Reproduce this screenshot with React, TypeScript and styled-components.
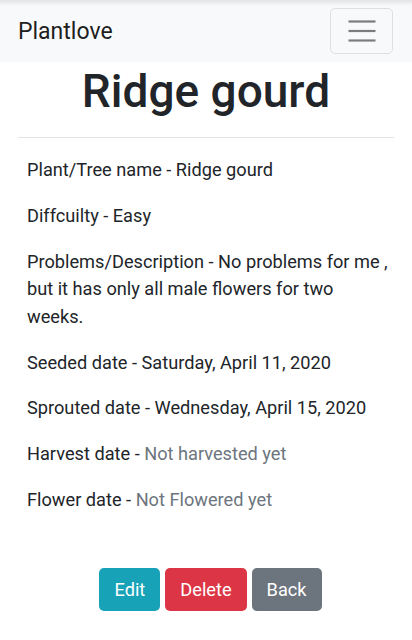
import React from "react";
import styled, { createGlobalStyle } from "styled-components";

const Global = createGlobalStyle`
  html, body { margin: 0; padding: 0; background: #fff; }
  body { font-family: Roboto, "Noto Sans", sans-serif; color: #212529; font-size: 18.2px; }
  * { box-sizing: border-box; }
`;

const Navbar = styled.nav`
  height: 62px;
  display: flex;
  align-items: center;
  justify-content: space-between;
  padding: 0 19px 0 18px;
  background: linear-gradient(#e2e3e4 0px, #f8f9fa 6px, #f8f9fa 100%);
`;

const Brand = styled.a`
  font-size: 23px;
  color: rgba(0, 0, 0, 0.9);
  text-decoration: none;
`;

const Toggler = styled.button`
  width: 63px;
  height: 46px;
  border: 1px solid rgba(0, 0, 0, 0.1);
  border-radius: 5px;
  background: transparent;
  display: flex;
  align-items: center;
  justify-content: center;
  padding: 0;
`;

const Container = styled.main`
  padding: 0 18px;
`;

const Title = styled.h1`
  margin: 2px 0 0;
  text-align: center;
  font-size: 46px;
  font-weight: 500;
  line-height: 1.2;
`;

const Rule = styled.hr`
  margin: 18px 0 0;
  border: 0;
  border-top: 1px solid rgba(0, 0, 0, 0.1);
`;

const Details = styled.section`
  padding: 18px 0 0 9px;
`;

const Para = styled.p`
  margin: 0 0 18.3px;
  font-size: 18.2px;
  line-height: 27.5px;
`;

const Muted = styled.span`
  color: #6c757d;
`;

const Actions = styled.div`
  display: flex;
  justify-content: center;
  gap: 5px;
  margin-top: 55px;
  padding-left: 9px;
`;

const Btn = styled.button<{ $bg: string }>`
  background: ${(p) => p.$bg};
  color: #fff;
  border: 0;
  border-radius: 5px;
  font-family: Roboto, sans-serif;
  font-size: 18.2px;
  height: 43px;
  padding: 0 15px;
`;

export default function App() {
  return (
    <>
      <Global />
      <Navbar>
        <Brand href="#">Plantlove</Brand>
        <Toggler aria-label="menu">
          <svg width="30" height="24" viewBox="0 0 30 24">
            <g stroke="rgba(0,0,0,0.5)" strokeWidth="2.2" strokeLinecap="butt">
              <line x1="1.5" y1="2.5" x2="28.5" y2="2.5" />
              <line x1="1.5" y1="12" x2="28.5" y2="12" />
              <line x1="1.5" y1="21.5" x2="28.5" y2="21.5" />
            </g>
          </svg>
        </Toggler>
      </Navbar>
      <Container>
        <Title>Ridge gourd</Title>
        <Rule />
        <Details>
          <Para>Plant/Tree name - Ridge gourd</Para>
          <Para>Diffcuilty - Easy</Para>
          <Para>
            Problems/Description - No problems for me , but it has only all male flowers for two weeks.
          </Para>
          <Para>Seeded date - Saturday, April 11, 2020</Para>
          <Para>Sprouted date - Wednesday, April 15, 2020</Para>
          <Para>
            Harvest date - <Muted>Not harvested yet</Muted>
          </Para>
          <Para>
            Flower date - <Muted>Not Flowered yet</Muted>
          </Para>
        </Details>
        <Actions>
          <Btn $bg="#17a2b8">Edit</Btn>
          <Btn $bg="#dc3545">Delete</Btn>
          <Btn $bg="#6c757d">Back</Btn>
        </Actions>
      </Container>
    </>
  );
}
